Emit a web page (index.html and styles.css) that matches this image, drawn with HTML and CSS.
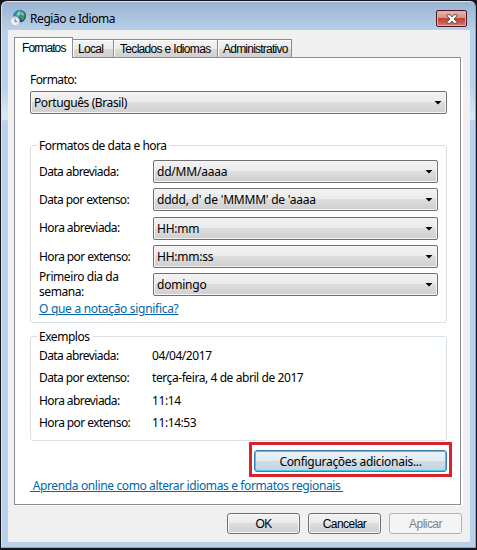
FILE: index.html
```html
<!DOCTYPE html>
<html lang="pt-BR">
<head>
<meta charset="utf-8">
<title>Região e Idioma</title>
<link rel="stylesheet" href="styles.css">
</head>
<body>
<div class="window">
  <header class="titlebar">
    <svg class="globe" width="17" height="18" viewBox="0 0 17 18">
      <defs><radialGradient id="sea" cx=".4" cy=".3" r=".7"><stop offset="0" stop-color="#a9e4fa"/><stop offset=".45" stop-color="#2779bd"/><stop offset="1" stop-color="#123d83"/></radialGradient></defs>
      <circle cx="9.7" cy="7" r="6.300" fill="url(#sea)"/>
      <path d="M5 3q2-2 4-2l-1 3-3 2zM11 2q3 1 4 4l-1 4-2 2-1-3-2-2 2-2z" fill="#45984a"/>
      <path d="M12 3l2 2-1 2-2-2z" fill="#94cb70"/>
      <circle cx="5" cy="12.3" r="4.500" fill="#edf1f3" stroke="#b5c0c8"/>
      <path d="M5 9.5v3.2h2.3" fill="none" stroke="#65747e"/>
    </svg>
    <h1>Região e Idioma</h1>
    <button class="close" aria-label="Fechar"><svg width="12" height="10" viewBox="0 0 12 10"><path d="M1 .7h3L6 3 8 .7h3v1.1L8 5l3 3.200v1.100H8L6 7 4 9.300H1V8.200L4 5 1 1.800z" fill="#fff" stroke="#55484d" stroke-width=".9"/></svg></button>
  </header>
  <main class="client">
    <nav class="tabs">
      <span class="tab active">Formatos</span><span class="tab local">Local</span><span class="tab keyboards">Teclados e Idiomas</span><span class="tab admin">Administrativo</span>
    </nav>
    <section class="panel">
      <div class="label format-label">Formato:</div>
      <div class="select main-select"><span>Português (Brasil)</span><i></i></div>
      <section class="group formats">
        <h2><span>Formatos de data e hora</span></h2>
        <div class="row"><span class="label">Data abreviada:</span><div class="select"><span>dd/MM/aaaa</span><i></i></div></div>
        <div class="row"><span class="label">Data por extenso:</span><div class="select"><span>dddd, d' de 'MMMM' de 'aaaa</span><i></i></div></div>
        <div class="row lower"><span class="label">Hora abreviada:</span><div class="select"><span>HH:mm</span><i></i></div></div>
        <div class="row"><span class="label">Hora por extenso:</span><div class="select"><span>HH:mm:ss</span><i></i></div></div>
        <div class="row"><span class="label two">Primeiro dia da semana:</span><div class="select"><span>domingo</span><i></i></div></div>
        <a class="notation">O que a notação significa?</a>
      </section>
      <section class="group examples">
        <h2><span>Exemplos</span></h2>
        <div class="example"><span>Data abreviada:</span><span class="value">04/04/2017</span></div>
        <div class="example"><span>Data por extenso:</span><span class="value">terça-feira, 4 de abril de 2017</span></div>
        <div class="example"><span>Hora abreviada:</span><span class="value">11:14</span></div>
        <div class="example"><span>Hora por extenso:</span><span class="value">11:14:53</span></div>
      </section>
      <div class="highlight"><button class="additional">Configurações adicionais...</button></div>
      <a class="learn">&nbsp;Aprenda online como alterar idiomas e formatos regionais&nbsp;</a>
    </section>
    <footer><button>OK</button><button>Cancelar</button><button class="disabled">Aplicar</button></footer>
  </main>
</div>
</body>
</html>
```
FILE: styles.css
```css
* { box-sizing: border-box; }
body { margin: 0; width: 477px; height: 550px; padding: 1px 1px 2px; overflow: hidden; background: #17171b; color: #000; font: 12px/16px "Noto Sans", sans-serif; letter-spacing: -.3px; }
h1, h2 { margin: 0; font: inherit; }
button { padding: 0; font: inherit; letter-spacing: inherit; color: inherit; }
.window { height: 547px; border: 1px solid #d5e7f5; border-right-color: #52bddd; border-bottom-color: #64bdd4; border-radius: 6px 6px 1px 1px; padding: 0 6px; background: linear-gradient(#9ab4d0, #b9d1ea 29px, #b9d1ea 85px, #dce9f5 117px, #b9d1ea 119px); }
.titlebar { height: 28px; display: flex; align-items: flex-start; padding: 8px 2px 0 2px; }
.globe { margin: -1px 3px 0 0; }
h1 { flex: 1; margin-top: 1px; letter-spacing: -.42px; }
.close { width: 31px; height: 17px; display: flex; align-items: center; justify-content: center; border: 1px solid #4b1729; border-radius: 2px; background: linear-gradient(#edb7b2, #d98f88 45%, #bd4536 50%, #c4594c 75%, #d98479); box-shadow: inset 0 0 0 1px #eaaaa4; }
.client { height: 512px; width: 462px; background: #f0f0f0; padding: 7px 8px 0 6px; }
.tabs { display: flex; align-items: flex-end; height: 20px; font-family: "Liberation Sans", sans-serif; }
.tab { height: 18px; border: 1px solid #898c95; border-bottom: 0; border-left-width: 0; padding: 1px 0 0 5px; background: linear-gradient(#f3f3f3, #ebebeb 50%, #dadada 52%, #d0d0d0); box-shadow: inset 1px 1px #fff; white-space: nowrap; }
.tab.active { position: relative; z-index: 1; width: 59px; height: 21px; margin-bottom: -1px; padding: 2px 0 0 7px; border-left-width: 1px; background: #fff; letter-spacing: -.95px; letter-spacing: -.9px; }
.tab.local { width: 41px; letter-spacing: -.7px; }
.tab.keyboards { width: 104px; padding-left: 6px; letter-spacing: -.68px; }
.tab.admin { width: 74px; letter-spacing: -.77px; }
.panel { width: 447px; height: 448px; border: 1px solid #898c95; background: #fff; box-shadow: 2px 1px #fff; padding: 14px 0 0 15px; display: flex; flex-direction: column; align-items: flex-start; }
.format-label { height: 19px; letter-spacing: -.6px; }
.select { width: 285px; height: 23px; display: flex; align-items: center; justify-content: space-between; border: 1px solid #707070; border-radius: 2px; background: linear-gradient(#f2f2f2, #ebebeb 48%, #dddddd 50%, #cfcfcf); padding: 0 4px 0 3px; box-shadow: inset 0 0 0 1px #f5f5f5; white-space: nowrap; letter-spacing: -.22px; }
.select i { width: 8px; height: 4px; background: #000; clip-path: polygon(0 0, 100% 0, 50% 100%); }
.main-select { width: 417px; letter-spacing: -.4px; }
.main-select span { padding-top: 1px; }
.group { width: 417px; border: 1px solid #d5dfe5; border-radius: 3px; padding-left: 8px; }
.group h2 { height: 16px; margin-top: -8px; letter-spacing: -.47px; }
.group h2 span { display: inline-block; margin-left: -2px; padding: 0 3px 0 2px; background: #fff; }
.formats { height: 178px; margin-top: 31px; }
.formats h2 { margin-bottom: 6px; }
.row { display: flex; height: 28px; }
.row .label { width: 114px; padding-top: 4px; letter-spacing: -.58px; }
.row.lower { height: 29px; padding-top: 1px; }
.row.lower .label { padding-top: 3px; }
.row .label.two { width: 90px; margin: -4px 24px 0 0; padding: 0; line-height: 15px; letter-spacing: -.42px; }
a { color: #0066a8; text-decoration: underline; white-space: nowrap; }
.notation { display: block; }
.examples { height: 105px; margin-top: 13px; }
.examples h2 { margin-bottom: 3px; }
.example { display: flex; height: 22.3px; letter-spacing: -.42px; }
.example > span:first-child { width: 113px; letter-spacing: -.58px; }
.highlight { width: 203px; height: 35px; margin: 1px 0 0 219px; padding: 5px 2px; border: 3px solid #d9232c; }
.additional { display: block; width: 193px; height: 22px; line-height: 19px; border: 1px solid #3c7fb1; border-radius: 3px; background: linear-gradient(#edf3f7, #e1ebf1 48%, #cddde7 50%, #c0d5e1); box-shadow: inset 0 0 0 1px #4cc4e5; }
.learn { margin-top: 1px; letter-spacing: -.38px; }
footer { display: flex; justify-content: flex-end; gap: 8px; padding-top: 8px; font-family: "Liberation Sans", sans-serif; }
footer button { width: 73px; height: 21px; border: 1px solid #707070; border-radius: 3px; background: linear-gradient(#f2f2f2, #ebebeb 48%, #dddddd 50%, #cfcfcf); box-shadow: inset 0 0 0 1px #f7f7f7; letter-spacing: -.55px; }
footer .disabled { color: #838383; border-color: #adb2b5; background: #f4f4f4; }
```
